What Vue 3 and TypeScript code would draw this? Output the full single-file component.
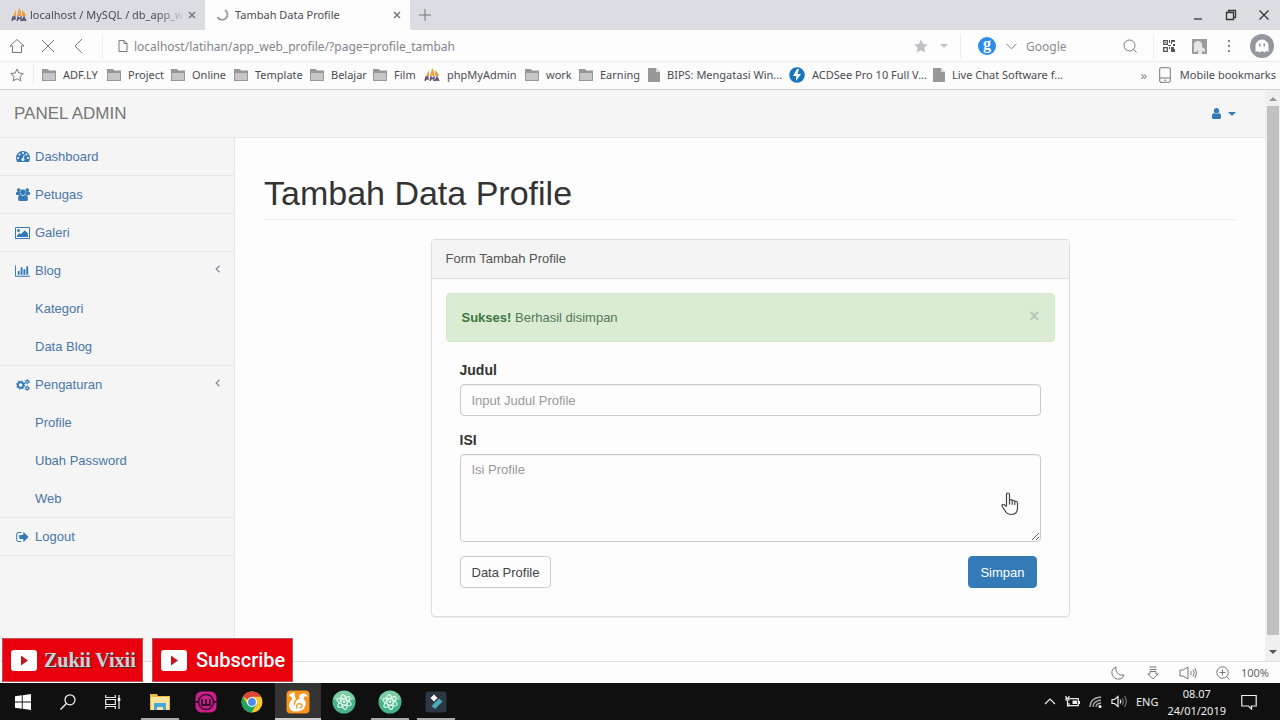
<script setup lang="ts">
import { ref } from 'vue'

interface Bookmark { label: string; kind: 'folder' | 'file' | 'pma' | 'bolt' }
interface MenuItem { label: string; icon: string; children?: string[] }
interface TaskApp { name: string; state: '' | 'open' | 'active' }

const bookmarks: Bookmark[] = [
  { label: 'ADF.LY', kind: 'folder' },
  { label: 'Project', kind: 'folder' },
  { label: 'Online', kind: 'folder' },
  { label: 'Template', kind: 'folder' },
  { label: 'Belajar', kind: 'folder' },
  { label: 'Film', kind: 'folder' },
  { label: 'phpMyAdmin', kind: 'pma' },
  { label: 'work', kind: 'folder' },
  { label: 'Earning', kind: 'folder' },
  { label: 'BIPS: Mengatasi Win...', kind: 'file' },
  { label: 'ACDSee Pro 10 Full V...', kind: 'bolt' },
  { label: 'Live Chat Software f...', kind: 'file' },
]

const menu: MenuItem[] = [
  { label: 'Dashboard', icon: 'dashboard' },
  { label: 'Petugas', icon: 'users' },
  { label: 'Galeri', icon: 'image' },
  { label: 'Blog', icon: 'chart', children: ['Kategori', 'Data Blog'] },
  { label: 'Pengaturan', icon: 'cogs', children: ['Profile', 'Ubah Password', 'Web'] },
  { label: 'Logout', icon: 'signout' },
]

const apps: TaskApp[] = [
  { name: 'File Explorer', state: 'open' },
  { name: 'WampServer', state: '' },
  { name: 'Chrome', state: '' },
  { name: 'UC Browser', state: 'active' },
  { name: 'Atom', state: '' },
  { name: 'Atom Project', state: 'open' },
  { name: 'Filmora', state: 'open' },
]

const url = ref('localhost/latihan/app_web_profile/?page=profile_tambah')
const query = ref('')
const judul = ref('')
const isi = ref('')
const alertVisible = ref(true)
</script>

<template>
  <div class="desktop">
    <header class="tabs">
      <div class="tab">
        <svg class="pma" viewBox="0 0 16 15" width="16" height="15"><path d="M2 9 5 3v6zM6 9 8 1q3 3 2 8zM11 9V3q3 2 4 6z" fill="#f2a144" /><path d="M1 14l1-4h2v2H2M6 14l1-4 1 2 2-2v4M11 14l2-4 2 4M12 13h2" fill="none" stroke="#5a4a6b" stroke-width="1.3" /></svg>
        <span class="tab-title faded">localhost / MySQL / db_app_w</span>
        <button class="tab-close" aria-label="Tutup tab"><svg viewBox="0 0 8 8" width="8" height="8"><path d="M1 1l6 6M7 1 1 7" class="ln bold" /></svg></button>
      </div>
      <div class="tab current">
        <svg viewBox="0 0 14 14" width="14" height="14"><path d="M9 2a5.3 5.3 0 1 1-7.5 7" fill="none" stroke="#999" stroke-width="1.8" /></svg>
        <span class="tab-title">Tambah Data Profile</span>
        <button class="tab-close" aria-label="Tutup tab"><svg viewBox="0 0 8 8" width="8" height="8"><path d="M1 1l6 6M7 1 1 7" class="ln bold" /></svg></button>
      </div>
      <button class="new-tab" aria-label="Tab baru"><svg viewBox="0 0 12 12" width="12" height="12"><path d="M6 0v12M0 6h12" class="ln" /></svg></button>
      <div class="win">
        <button aria-label="Minimize"><svg viewBox="0 0 12 12" width="12" height="12"><path d="M2 10h8" stroke="#333" stroke-width="1.3" /></svg></button>
        <button aria-label="Restore"><svg viewBox="0 0 12 12" width="12" height="12"><path d="M1.5 3.5h7v7h-7zM3.5 3V1.500h7v7H9" fill="none" stroke="#333" stroke-width="1.3" /></svg></button>
        <button aria-label="Close"><svg viewBox="0 0 12 12" width="12" height="12"><path d="M1.500 1.500l9 9M10.500 1.500l-9 9" stroke="#333" stroke-width="1.3" /></svg></button>
      </div>
    </header>

    <div class="toolbar">
      <button class="nav-btn" aria-label="Beranda"><svg viewBox="0 0 16 16" width="16" height="16"><path d="M1 8 8 1.500 15 8h-2.500v6.500h-9V8z" class="ln" /></svg></button>
      <button class="nav-btn" aria-label="Berhenti"><svg viewBox="0 0 14 14" width="14" height="14"><path d="M1 1l12 12M13 1 1 13" class="ln" /></svg></button>
      <button class="nav-btn" aria-label="Kembali"><svg viewBox="0 0 14 16" width="14" height="16"><path d="M10 1 3 8l7 7" class="ln" /></svg></button>
      <form class="address" @submit.prevent>
        <svg viewBox="0 0 10 12" width="10" height="12"><path d="M1 .5h5l3 3v8H1zM6 .5v3h3" class="ln" /></svg>
        <input v-model="url" type="text" aria-label="Alamat" />
      </form>
      <button class="fav" aria-label="Favorit"><svg viewBox="0 0 14 14" width="14" height="14"><path d="M7 .5l2 4.500 4.800.5-3.600 3.300 1 4.800L7 11.200l-4.200 2.400 1-4.800L.2 5.500 5 5z" fill="#c0c0c6" /></svg></button>
      <button class="fav-more" aria-label="Pilihan favorit"><svg viewBox="0 0 8 4" width="8" height="4"><path d="M0 0h8L4 4z" fill="#c4c4c9" /></svg></button>
      <form class="search" @submit.prevent>
        <span class="g-logo">g</span>
        <button class="engine" aria-label="Mesin pencari"><svg viewBox="0 0 11 7" width="11" height="7"><path d="M.5.8l5 5 5-5" class="ln" /></svg></button>
        <input v-model="query" type="text" placeholder="Google" aria-label="Cari" />
        <button class="go" aria-label="Mulai cari"><svg viewBox="0 0 14 14" width="14" height="14"><circle cx="6.500" cy="6.500" r="5.500" class="ln" /><path d="M10.500 10.500l3 3" class="ln" /></svg></button>
      </form>
      <div class="extras">
        <button aria-label="Kode QR"><svg viewBox="0 0 12 12" width="12" height="12"><path d="M.7.7h3.600v3.600H.7zM.7 7.700h3.600v3.600H.7z" fill="none" stroke="#555" stroke-width="1.3" /><path d="M2 2h1v1H2zM6 0h1v3H6zM8 0h4v2H9v2H8zM5 5h3v1H5zM10 4h2v2h-2zM6 7h1v2H6zM8 7h3v2h1v3H8V9.500z" fill="#555" /></svg></button>
        <button aria-label="Gambar"><svg viewBox="0 0 15 15" width="15" height="15"><path d="M0 0h15v15H0z" fill="#9c9c9c" /><path d="M2 13V8Q1 2 6 2q5 0 4 6l3 2v3l-3-1v3H6v-4l-2 2z" fill="#e6e6e6" /></svg></button>
        <button aria-label="Menu"><svg viewBox="0 0 4 14" width="4" height="14"><path d="M1 1h2v2H1zM1 6h2v2H1zM1 11h2v2H1z" fill="#888" /></svg></button>
        <button aria-label="Akun"><svg viewBox="0 0 24 24" width="24" height="24"><circle cx="12" cy="12" r="12" fill="#96969e" /><path d="M5.500 18v-6a6.500 6.500 0 0 1 13 0v6l-2-1-2 1.500-2.500-1.500L9.500 18.500 7.500 17z" fill="#fff" /><path d="M9 9.500h1.500v3H9zM13.500 9.500H15v3h-1.500z" fill="#96969e" /></svg></button>
      </div>
    </div>

    <nav class="bookmarks" aria-label="Bookmark">
      <button class="star" aria-label="Tambah bookmark"><svg viewBox="0 0 14 14" width="14" height="14"><path d="M7 1l1.800 4 4.500.5-3.400 3 1 4.500L7 10.700 3.100 13l1-4.500-3.400-3L5.200 5z" class="ln" /></svg></button>
      <div class="bm-list">
        <a v-for="b in bookmarks" :key="b.label" href="#">
          <svg v-if="b.kind === 'folder'" viewBox="0 0 14 12" width="14" height="12"><path d="M0 0h6l1 1.500h7V12H0z" fill="#979797" /><path d="M1 4h12v7H1z" fill="#c6c6c6" /></svg>
          <svg v-else-if="b.kind === 'file'" viewBox="0 0 12 14" width="12" height="14"><path d="M0 0h8l4 4v10H0z" fill="#999" /><path d="M8 0v4h4" fill="#ddd" /></svg>
          <svg v-else-if="b.kind === 'pma'" viewBox="0 0 16 15" width="16" height="15"><path d="M2 9 5 3v6zM6 9 8 1q3 3 2 8zM11 9V3q3 2 4 6z" fill="#f2a144" /><path d="M1 14l1-4h2v2H2M6 14l1-4 1 2 2-2v4M11 14l2-4 2 4M12 13h2" fill="none" stroke="#5a4a6b" stroke-width="1.3" /></svg>
          <svg v-else viewBox="0 0 16 16" width="16" height="16"><circle cx="8" cy="8" r="7.800" fill="#1b75b8" /><path d="M8 2 4 9h3.300L7 14l5-7H8.500L10 2z" fill="#fff" /></svg>
          <span>{{ b.label }}</span>
        </a>
      </div>
      <button class="more" aria-label="Bookmark lain">»</button>
      <a class="mobile" href="#"><svg viewBox="0 0 12 16" width="12" height="16"><path d="M2 .7h8q1.300 0 1.300 1.300v12q0 1.300-1.300 1.300H2Q.7 15.300.7 14V2Q.7.7 2 .7zM1 11h10M5 13.200h2" class="ln" /></svg><span>Mobile bookmarks</span></a>
    </nav>

    <div class="viewport">
      <div class="page">
        <header class="topnav">
          <a class="brand" href="#">PANEL ADMIN</a>
          <button class="user" aria-label="Pengguna">
            <svg viewBox="128 128 1536 1536" width="11" height="11"><path fill="#337ab7" d="M1536 1399q0 109-62.500 187t-150.500 78h-854q-88 0-150.500-78t-62.500-187q0-85 8.500-160.500t31.500-152 58.500-131 94-89 134.500-34.500q131 128 313 128t313-128q76 0 134.500 34.500t94 89 58.500 131 31.500 152 8.500 160.500zm-256-887q0 159-112.500 271.500t-271.500 112.500-271.500-112.500-112.500-271.500 112.500-271.500 271.500-112.500 271.500 112.500 112.500 271.500z" /></svg>
            <svg viewBox="0 0 8 4" width="8" height="4"><path d="M0 0h8L4 4z" fill="#337ab7" /></svg>
          </button>
        </header>
        <div class="body">
          <aside class="sidebar">
            <ul>
              <li v-for="m in menu" :key="m.label">
                <a href="#">
                  <span class="ico">
                    <svg v-if="m.icon === 'dashboard'" viewBox="0 256 1792 1408" width="14" height="11"><path d="M384 1152q0-53-37.500-90.500t-90.500-37.500-90.500 37.500-37.500 90.500 37.500 90.500 90.500 37.500 90.500-37.500 37.500-90.500zm192-448q0-53-37.500-90.500t-90.500-37.500-90.500 37.500-37.500 90.500 37.500 90.500 90.500 37.500 90.500-37.500 37.500-90.500zm428 481l101-382q6-26-7.500-48.500t-38.500-29.500-48 6.500-30 39.500l-101 382q-60 5-107 43.500t-63 98.500q-20 77 20 146t117 89 146-20 89-117q16-60-6-117t-72-91zm660-33q0-53-37.500-90.500t-90.500-37.500-90.500 37.500-37.500 90.500 37.500 90.500 90.500 37.500 90.500-37.500 37.500-90.500zm-640-640q0-53-37.500-90.500t-90.500-37.500-90.500 37.500-37.500 90.500 37.500 90.500 90.500 37.500 90.500-37.500 37.500-90.500zm448 192q0-53-37.500-90.500t-90.500-37.500-90.500 37.500-37.500 90.500 37.500 90.500 90.500 37.500 90.500-37.500 37.500-90.500zm320 448q0 261-141 483-19 29-54 29h-1402q-35 0-54-29-141-221-141-483 0-182 71-348t191-286 286-191 348-71 348 71 286 191 191 286 71 348z" /></svg>
                    <svg v-else-if="m.icon === 'users'" viewBox="0 0 15 14" width="14" height="13"><circle cx="3" cy="2.200" r="2" /><circle cx="12" cy="2.200" r="2" /><path d="M0 7.500V5.200Q.5 4 1.500 4l3 .7Q4 6.500 5 7.500zM15 7.500V5.200Q14.500 4 13.500 4l-3 .7q.5 1.800-.5 2.800z" /><circle cx="7.500" cy="4.600" r="2.900" /><path d="M2.200 12q0-4.700 2.600-4.700 2.700 2 5.400 0 2.600 0 2.600 4.700 0 2-2 2H4.200q-2 0-2-2z" /></svg>
                    <svg v-else-if="m.icon === 'image'" viewBox="-64 128 1920 1536" width="15" height="12"><path d="M576 576q0 80-56 136t-136 56-136-56-56-136 56-136 136-56 136 56 56 136zm1024 384v448h-1408v-192l320-320 160 160 512-512zm96-704h-1600q-13 0-22.500 9.500t-9.500 22.500v1216q0 13 9.500 22.500t22.500 9.500h1600q13 0 22.500-9.500t9.500-22.500v-1216q0-13-9.500-22.500t-22.500-9.500zm160 32v1216q0 66-47 113t-113 47h-1600q-66 0-113-47t-47-113v-1216q0-66 47-113t113-47h1600q66 0 113 47t47 113z" /></svg>
                    <svg v-else-if="m.icon === 'chart'" viewBox="0 128 2048 1536" width="15" height="12"><path d="M640 896v512h-256v-512h256zm384-512v1024h-256v-1024h256zm1024 1152v128h-2048v-1536h128v1408h1920zm-640-896v768h-256v-768h256zm384-384v1152h-256v-1152h256z" /></svg>
                    <svg v-else-if="m.icon === 'cogs'" viewBox="0 0 15 13" width="14" height="12"><g fill="none" stroke="#337ab7"><circle cx="5" cy="6.500" r="3" stroke-width="2" /><circle cx="5" cy="6.500" r="4.400" stroke-width="1.200" stroke-dasharray="1.730 1.730" /><circle cx="12" cy="3" r="1.500" stroke-width="1.200" /><circle cx="12" cy="3" r="2.400" stroke-width=".9" stroke-dasharray="1.250 1.250" /><circle cx="12" cy="10" r="1.500" stroke-width="1.200" /><circle cx="12" cy="10" r="2.400" stroke-width=".9" stroke-dasharray="1.250 1.250" /></g></svg>
                    <svg v-else viewBox="64 256 1600 1280" width="13" height="10"><path d="M704 1440q0 4 1 20t.5 26.500-3 23.500-10 19.500-20.500 6.500h-320q-119 0-203.500-84.500t-84.500-203.500v-704q0-119 84.500-203.500t203.500-84.500h320q13 0 22.500 9.500t9.500 22.500q0 4 1 20t.5 26.500-3 23.500-10 19.500-20.500 6.500h-320q-66 0-113 47t-47 113v704q0 66 47 113t113 47h312l11.500 1 11.500 3 8 5.500 7 9 2 13.500zm928-544q0 26-19 45l-544 544q-19 19-45 19t-45-19-19-45v-288h-448q-26 0-45-19t-19-45v-384q0-26 19-45t45-19h448v-288q0-26 19-45t45-19 45 19l544 544q19 19 19 45z" /></svg>
                  </span>
                  <span>{{ m.label }}</span>
                  <svg v-if="m.children" class="angle" viewBox="0 0 6 8" width="6" height="8"><path d="M4.500.7 1.200 4l3.300 3.300" fill="none" stroke="#8292a3" stroke-width="1.300" /></svg>
                </a>
                <ul v-if="m.children" class="sub">
                  <li v-for="c in m.children" :key="c"><a href="#">{{ c }}</a></li>
                </ul>
              </li>
            </ul>
          </aside>
          <main>
            <h1>Tambah Data Profile</h1>
            <section class="panel">
              <div class="panel-head">Form Tambah Profile</div>
              <div class="panel-body">
                <div v-if="alertVisible" class="alert" role="alert">
                  <span><strong>Sukses!</strong> Berhasil disimpan</span>
                  <button aria-label="Tutup" @click="alertVisible = false">×</button>
                </div>
                <form @submit.prevent>
                  <label for="judul">Judul</label>
                  <input id="judul" v-model="judul" type="text" placeholder="Input Judul Profile" />
                  <label for="isi">ISI</label>
                  <div class="area">
                    <textarea id="isi" v-model="isi" placeholder="Isi Profile"></textarea>
                    <svg class="pointer" viewBox="0 0 18 24" width="18" height="24"><path d="M5.500 14V2.800q0-1.800 1.500-1.800t1.500 1.800V8q2.500-1 2.700.7 2.300-.8 2.600.8 2.500-.6 2.700 1.500v5q0 6-5.500 6.500Q6 22.500 4.200 19L1.200 14.500q-.8-1.500.5-2 1.500-.4 3.800 2.500M8.500 8v4.500M11.200 8.700v4M13.800 9.500v3.500" fill="#fff" stroke="#444" stroke-width="1.200" /></svg>
                  </div>
                  <div class="actions">
                    <button type="button" class="btn">Data Profile</button>
                    <button type="submit" class="btn primary">Simpan</button>
                  </div>
                </form>
              </div>
            </section>
          </main>
        </div>
      </div>
      <div class="scroll" aria-hidden="true">
        <svg viewBox="0 0 8 4" width="8" height="4"><path d="M0 4h8L4 0z" fill="#999" /></svg>
        <div class="thumb"></div>
        <svg viewBox="0 0 8 4" width="8" height="4"><path d="M0 0h8L4 4z" fill="#555" /></svg>
      </div>
    </div>

    <footer class="status">
      <button aria-label="Mode malam"><svg viewBox="0 0 14 14" width="14" height="14"><path d="M5 1Q0 3 1 8q2 6 8 5 3-.7 4-4-4 1-6.500-2T5 1z" class="ln" /></svg></button>
      <button aria-label="Unduhan"><svg viewBox="0 0 12 14" width="12" height="14"><path d="M2.500 1h7M2.500 3.500h7M3 5.500h6V8h2.300L6 13 .7 8H3z" class="ln" /></svg></button>
      <button aria-label="Suara"><svg viewBox="0 0 18 14" width="18" height="14"><path d="M1 4h3l5-3v12l-5-3H1zM11.500 5q1.500 2 0 4M14 3.500q2.500 3.500 0 7M16 2q3 5 0 10" class="ln" /></svg></button>
      <button aria-label="Perbesar"><svg viewBox="0 0 14 14" width="14" height="14"><circle cx="6.500" cy="6.500" r="5.700" class="ln" /><path d="M6.500 3.500v6M3.500 6.500h6M10.500 10.500l3 3" class="ln" /></svg></button>
      <span>100%</span>
    </footer>

    <div class="taskbar">
      <div class="system">
        <button aria-label="Start"><svg viewBox="0 0 16 16" width="16" height="16"><path d="M0 2.300 6.800 1.300v6.200H0zM7.700 1.200 16 0v7.500H7.700zM0 8.400h6.800v6.300L0 13.700zM7.700 8.400H16V16l-8.300-1.200z" fill="#fff" /></svg></button>
        <button aria-label="Cari di Windows"><svg viewBox="0 0 16 16" width="16" height="16"><circle cx="10" cy="5.800" r="5" fill="none" stroke="#eee" stroke-width="1.300" /><path d="M6.400 9.500.5 15.500" stroke="#eee" stroke-width="1.400" /></svg></button>
        <button aria-label="Task View"><svg viewBox="0 0 16 16" width="16" height="16"><path d="M.7 1v2.500h9.600V1M.7 5.500h9.600v5H.7zM.7 15v-2.500h9.600V15M14 1v14" fill="none" stroke="#eee" stroke-width="1.200" /><path d="M12.700 4h2.600v3h-2.600z" fill="#eee" /></svg></button>
      </div>
      <div class="apps">
        <button v-for="(a, i) in apps" :key="a.name" :class="a.state" :aria-label="a.name">
          <svg v-if="i === 0" viewBox="0 0 20 18" width="20" height="18"><path d="M0 1h7l1 2h12v14H0z" fill="#e8b84b" /><path d="M1 4h18v13H1z" fill="#fce49b" /><path d="M4 10h12v7h-3v-3H7v3H4z" fill="#43a6dc" /></svg>
          <svg v-else-if="i === 1" viewBox="0 0 22 22" width="22" height="22"><rect x=".5" y=".5" width="21" height="21" rx="6" fill="#cc1f8b" /><circle cx="11" cy="11" r="7.500" fill="none" stroke="#3f0d32" stroke-width="1.700" /><path d="M7 8v6h8V8M11 8v6M0 11h3.500M18.500 11H22" fill="none" stroke="#3f0d32" stroke-width="2" /></svg>
          <svg v-else-if="i === 2" viewBox="0 0 22 22" width="22" height="22"><circle cx="11" cy="11" r="10.500" fill="#f7c92e" /><path d="M11 11 1.900 5.700A10.500 10.500 0 0 1 20.100 5.800H11z" fill="#db4437" /><path d="M1.900 5.700a10.500 10.500 0 0 0 8.600 15.800l5-8L11 11 6.500 13.600z" fill="#1da462" /><circle cx="11" cy="11" r="5" fill="#fff" /><circle cx="11" cy="11" r="3.900" fill="#4c8bf5" /></svg>
          <svg v-else-if="i === 3" viewBox="0 0 24 24" width="24" height="24"><rect x=".5" y=".5" width="23" height="23" rx="4" fill="#f7941e" /><path d="M2.500 6.500Q4.500 2 9 2.500q-1 2 0 3.500 1.500 2.500-.5 5Q7 13.500 8.500 16q.5-5.500 5-7.500-1-4 2.500-4.800 4.500-.7 6 3.300-2.500-1.500-4 0-1 1.500.5 3Q21 13 19 16.500 17 21.500 10 21.500q-6.500 0-7-6 0-3.500 2.500-5.500Q7 8.500 5.500 7 4.500 6 2.500 6.500z" fill="#fff" /><path d="M11 18.500q-1.500-4 2-4.800 3-.2 3 2.300-.3 2.200-2.500 1.500" fill="none" stroke="#f7941e" stroke-width="1.300" /></svg>
          <svg v-else-if="i < 6" viewBox="0 0 24 24" width="24" height="24"><circle cx="12" cy="12" r="11.500" fill="#49b389" /><path d="M1 9a11.500 11.500 0 0 1 22 0q-10 5-22 0z" fill="#7dcfa3" /><g fill="none" stroke="#e3fbef" stroke-width="1.100"><ellipse cx="12" cy="12" rx="3" ry="7.500" transform="rotate(-10 12 12)" /><ellipse cx="12" cy="12" rx="3" ry="7.500" transform="rotate(50 12 12)" /><ellipse cx="12" cy="12" rx="3" ry="7.500" transform="rotate(110 12 12)" /></g><circle cx="12" cy="12" r="1.300" fill="#fff" /></svg>
          <svg v-else viewBox="0 0 22 22" width="22" height="22"><rect x=".5" y=".5" width="21" height="21" rx="3" fill="#2d3744" /><path d="M9 3.500 12.500 7 9 10.500 5.500 7z" fill="#fff" /><path d="M6.500 15 14 7.500l3.500 3L10 18z" fill="#4aa9b8" /></svg>
        </button>
      </div>
      <div class="tray">
        <svg viewBox="0 0 12 7" width="12" height="7"><path d="M1 6l5-5 5 5" class="lt" /></svg>
        <svg viewBox="0 0 15 12" width="15" height="12"><path d="M5 2.700h8.300v7H4V7" class="lt" /><path d="M7.500 4.500H12V8H7.500zM13.500 5H15v3h-1.500z" fill="#eee" /><path d="M1 0v2.500h3V0M1 2h3v2H1zM2.500 4v6H4" class="lt" /></svg>
        <svg viewBox="0 0 13 12" width="13" height="12"><path d="M1 11Q1 2 12 1M4 11q0-6 8-7M7 11q0-3.500 5-4" fill="none" stroke="#aaa" stroke-width="1.300" /><circle cx="11" cy="10.500" r="1.500" fill="#fff" /></svg>
        <svg viewBox="0 0 16 13" width="16" height="13"><path d="M1 4.500h2.500l3.500-3v10l-3.500-3H1zM9 4.500q1.500 2 0 4" class="lt" /><path d="M11 3q2.500 3.500 0 7M13.500 1q3.500 5.500 0 11" fill="none" stroke="#777" stroke-width="1.200" /></svg>
        <span class="lang">ENG</span>
        <time class="clock" datetime="2019-01-24T08:07"><span>08.07</span><span>24/01/2019</span></time>
        <svg class="note" viewBox="0 0 16 16" width="16" height="16"><path d="M.8 1.500h14.400v10.500h-4.700v3L7.500 12H.8z" class="lt" /></svg>
      </div>
    </div>

    <div class="badges">
      <a class="badge" href="#"><svg viewBox="0 0 26 21" width="26" height="21"><rect width="26" height="21" rx="3" fill="#fff" /><path d="M10 5.500l7 5-7 5z" fill="#c4141c" /></svg><span class="serif">Zukii Vixii</span></a>
      <a class="badge" href="#"><svg viewBox="0 0 26 21" width="26" height="21"><rect width="26" height="21" rx="3" fill="#fff" /><path d="M10 5.500l7 5-7 5z" fill="#c4141c" /></svg><span class="sans">Subscribe</span></a>
    </div>
  </div>
</template>

<style>
html, body { margin: 0; }
body { overflow: hidden; }
</style>

<style scoped>
* { box-sizing: border-box; }
.desktop { position: relative; display: flex; flex-direction: column; height: 100vh; font-family: "Noto Sans", "Open Sans", sans-serif; font-size: 11px; color: #4c4c50; background: #fdfdfd; }
svg { display: block; flex: none; }
button { display: flex; align-items: center; justify-content: center; padding: 0; border: 0; background: none; font: inherit; color: inherit; }
input, textarea { font: inherit; outline: 0; }
a { color: inherit; text-decoration: none; }
ul { margin: 0; padding: 0; list-style: none; }
.ln { fill: none; stroke: #777; stroke-width: 1; }
.ln.bold { stroke-width: 1.500; }
.lt { fill: none; stroke: #eee; stroke-width: 1.200; }

.tabs { display: flex; flex: none; height: 31px; padding-bottom: 1px; background: linear-gradient(#dcdde2 30px, #fdfdfe 30px); }
.tab { display: flex; align-items: center; width: 205px; padding: 0 9px 1px 11px; }
.tab.current { background: #fdfdfd; }
.tab-title { flex: 1; margin-left: 3px; white-space: nowrap; }
.tab.current .tab-title { margin-left: 5px; }
.faded { margin-right: 2px; mask-image: linear-gradient(90deg, #000 82%, transparent); }
.new-tab { width: 30px; }
.win { display: flex; margin-left: auto; }
.win button { width: 33px; }

.toolbar { display: flex; flex: none; align-items: center; height: 31px; padding-left: 1px; background: #fdfdfe; border-bottom: 1px solid #ececf0; font-size: 12px; }
.nav-btn { width: 31px; height: 28px; }
.address { display: flex; flex: 1; align-items: center; gap: 6px; margin-left: 8px; padding-left: 15px; border-left: 1px solid #ececf0; height: 24px; }
.address input { flex: 1; min-width: 0; padding: 0; border: 0; background: none; color: #85858a; }
.fav { width: 28px; }
.fav-more { width: 18px; }
.search { display: flex; align-items: center; width: 194px; height: 24px; margin-left: 7px; padding: 0 8px 0 17px; border: solid #ececf0; border-width: 0 1px; }
.g-logo { flex: none; width: 18px; height: 18px; border-radius: 50%; background: #2b8ceb; color: #fff; font: bold 16px/14px "Liberation Serif", serif; text-align: center; }
.engine { flex: none; width: 30px; }
.search input { flex: 1; min-width: 0; padding: 0; border: 0; background: none; }
.search input::placeholder { color: #8c8c90; }
.go { flex: none; width: 30px; }
.extras { display: flex; align-items: center; }
.extras button { width: 30px; }
.extras button:last-child { width: 36px; }

.bookmarks { display: flex; flex: none; align-items: center; height: 28px; padding-bottom: 2px; background: #fcfcfd; border-bottom: 1px solid #cfcfd2; white-space: nowrap; }
.star { width: 34px; border-right: 1px solid #ececf0; height: 20px; }
.bm-list { display: grid; flex: 1; grid-template-columns: 65px 64px 63px 76px 63px 51px 101px 54px 69px 141px 144px 1fr; margin-left: 8px; }
.bm-list a { display: flex; align-items: center; gap: 7px; }
.more { width: 30px; font-size: 13px; color: #888; }
.mobile { display: flex; align-items: center; gap: 9px; padding-right: 4px; }

.viewport { display: flex; flex: 1; min-height: 0; overflow: hidden; font-family: "Liberation Sans", Arial, sans-serif; font-size: 13px; }
.page { display: flex; flex: 1; flex-direction: column; min-width: 0; }
.topnav { display: flex; flex: none; align-items: center; justify-content: space-between; height: 48px; padding: 0 29px 0 14px; background: #f5f5f5; border-bottom: 1px solid #e7e7e7; }
.brand { font-size: 17px; color: #777; }
.user { gap: 6px; }
.body { display: flex; flex: 1; min-height: 0; background: #fdfdfd; }
.sidebar { flex: none; width: 235px; background: #f5f5f5; border-right: 1px solid #e7e7e7; color: #4a77a8; }
.sidebar > ul > li { border-bottom: 1px solid #e7e7e7; }
.sidebar > ul > li > a { display: flex; align-items: center; height: 37px; padding: 0 13px 0 15px; }
.ico { display: flex; justify-content: center; width: 15px; margin-right: 5px; fill: #337ab7; }
.angle { margin: 0 0 4px auto; }
.sub a { display: flex; align-items: center; height: 38px; padding-left: 35px; }

main { flex: 1; min-width: 0; padding: 36px 29px 0; }
h1 { margin: 0 0 19px; padding-bottom: 7px; border-bottom: 1px solid #eee; font-size: 34px; font-weight: 400; line-height: 38px; color: #333; }
.panel { max-width: 639px; margin: 0 auto; border: 1px solid #ddd; border-radius: 4px; box-shadow: 0 1px 1px rgba(0, 0, 0, .05); }
.panel-head { padding: 9px 14px; border-bottom: 1px solid #ddd; background: #f4f4f4; line-height: 20px; color: #555; }
.panel-body { padding: 14px 14px 28px; }
.alert { display: flex; align-items: center; justify-content: space-between; height: 49px; padding: 0 14px 0 15px; border: 1px solid #d6e9c6; border-radius: 4px; background: #dbecd5; color: #55775a; }
.alert strong { color: #3c763d; }
.alert button { padding-bottom: 4px; font-size: 18px; font-weight: 700; line-height: 18px; color: #b9c9b5; }
form:not(.address, .search) { padding: 18px 14px 0; }
label { display: block; margin-bottom: 4px; font-size: 14px; font-weight: 700; line-height: 20px; color: #333; }
#judul, #isi { display: block; width: 100%; padding: 5px 11px; border: 1px solid #ccc; border-radius: 4px; background: #fdfdfd; color: #555; line-height: 20px; box-shadow: inset 0 1px 1px rgba(0, 0, 0, .06); }
#judul { height: 32px; margin-bottom: 14px; }
#isi { height: 88px; resize: vertical; }
#judul::placeholder, #isi::placeholder { color: #999; }
.area { position: relative; }
.pointer { position: absolute; right: 22px; bottom: 26px; }
.actions { display: flex; justify-content: space-between; margin-top: 14px; padding-right: 4px; }
.btn { height: 32px; padding: 0 11px; border: 1px solid #ccc; border-radius: 4px; background: #fdfdfd; color: #444; }
.btn.primary { border-color: #337ab7; background: #337ab7; color: #fff; }

.scroll { display: flex; flex: none; flex-direction: column; align-items: center; gap: 5px; width: 15px; padding: 7px 0; background: #f0f0f0; }
.thumb { flex: 1; width: 12px; margin-bottom: 10px; background: #c1c1c1; }

.status { display: flex; flex: none; align-items: center; justify-content: flex-end; height: 22px; padding-right: 11px; border-top: 1px solid #dedede; background: #fdfdfd; }
.status button { width: 35px; }
.status span { color: #666; }

.taskbar { display: flex; flex: none; height: 37px; background: #101010; color: #eee; }
.system { display: flex; margin-right: 2px; }
.system button { width: 45px; }
.apps { display: flex; }
.apps button { position: relative; width: 46px; }
.apps .active { background: #333; }
.apps .open::after, .apps .active::after { content: ""; position: absolute; right: 4px; bottom: 0; left: 4px; height: 2px; background: #aaa; }
.apps .active::after { right: 0; left: 0; background: #ccc; }
.tray { display: flex; align-items: center; gap: 9px; margin-left: auto; padding-right: 23px; }
.clock { display: flex; flex-direction: column; align-items: center; margin-right: 6px; line-height: 17px; }

.badges { position: absolute; bottom: 38px; left: 2px; display: flex; gap: 9px; }
.badge { display: flex; align-items: center; width: 141px; height: 44px; padding-left: 8px; background: #e8000c; border: 1px solid #b5545c; color: #fff; }
.serif { margin-left: 7px; font: 700 20px "Liberation Serif", serif; color: #c9d4d6; text-shadow: 1px 1px 1px #333; }
.sans { margin-left: 9px; font: 500 20px Roboto, sans-serif; color: #fff; }
</style>
